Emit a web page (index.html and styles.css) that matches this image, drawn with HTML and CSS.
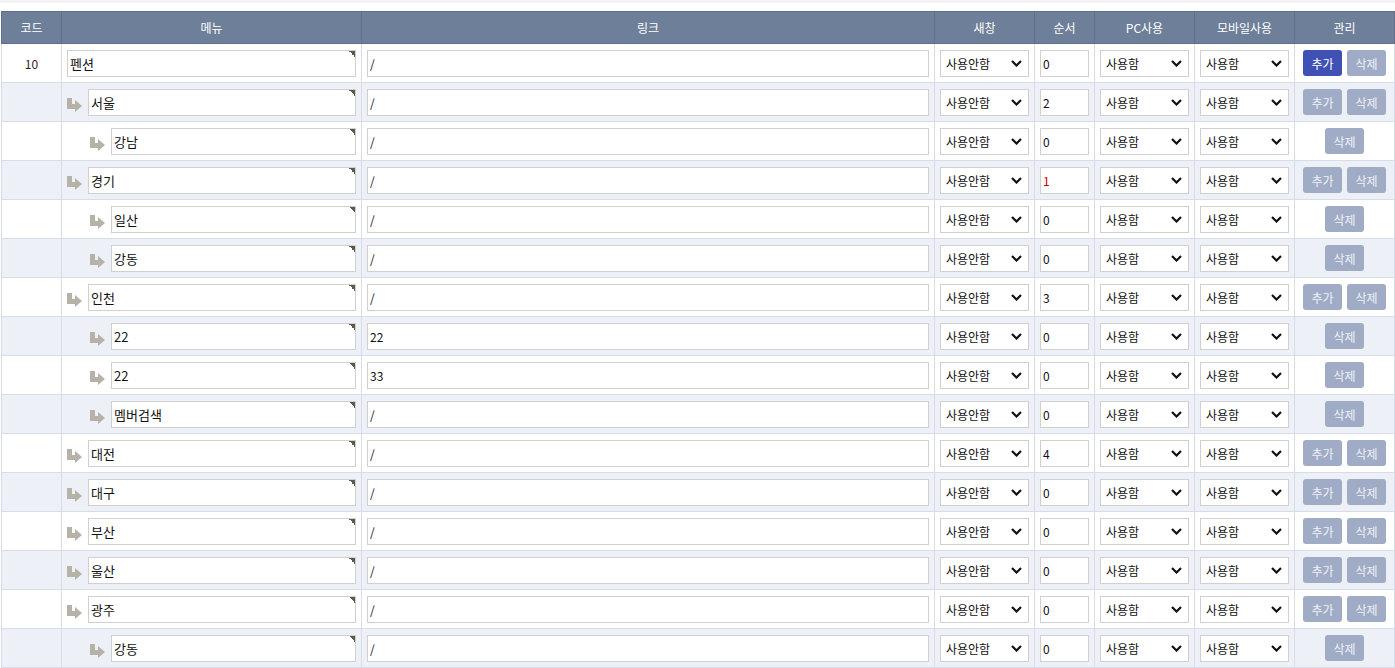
FILE: index.html
```html
<!DOCTYPE html>
<html>
<head>
  <title>메뉴 관리</title>
  <link rel="stylesheet" href="styles.css">
</head>
<body>
  <div class="topline"></div>
  <div class="wrap">
    <table class="menu-table">
      <colgroup>
        <col style="width:60px"><col style="width:300px"><col style="width:573px"><col style="width:100px">
        <col style="width:60px"><col style="width:100px"><col style="width:100px"><col style="width:100px">
      </colgroup>
      <thead>
        <tr>
          <th>코드</th><th>메뉴</th><th>링크</th><th>새창</th><th>순서</th><th>PC사용</th><th>모바일사용</th><th>관리</th>
        </tr>
      </thead>
      <tbody>
        <tr>
          <td class="code">10</td>
          <td><div class="menu-cell"><input class="name" value="펜션"></div></td>
          <td><input class="link" value="/"></td>
          <td><select><option>사용안함</option></select></td>
          <td><input class="order" value="0"></td>
          <td><select><option>사용함</option></select></td>
          <td><select><option>사용함</option></select></td>
          <td><div class="btns"><button class="btn on">추가</button><button class="btn">삭제</button></div></td>
        </tr>
        <tr>
          <td></td>
          <td><div class="menu-cell d1"><span class="arrow"><svg viewBox="0 0 15 14"><path d="M0 0H5V6H8V2L15 8L8 14V11H0Z"/></svg></span><input class="name" value="서울"></div></td>
          <td><input class="link" value="/"></td>
          <td><select><option>사용안함</option></select></td>
          <td><input class="order" value="2"></td>
          <td><select><option>사용함</option></select></td>
          <td><select><option>사용함</option></select></td>
          <td><div class="btns"><button class="btn">추가</button><button class="btn">삭제</button></div></td>
        </tr>
        <tr>
          <td></td>
          <td><div class="menu-cell d2"><span class="arrow"><svg viewBox="0 0 15 14"><path d="M0 0H5V6H8V2L15 8L8 14V11H0Z"/></svg></span><input class="name" value="강남"></div></td>
          <td><input class="link" value="/"></td>
          <td><select><option>사용안함</option></select></td>
          <td><input class="order" value="0"></td>
          <td><select><option>사용함</option></select></td>
          <td><select><option>사용함</option></select></td>
          <td><div class="btns"><button class="btn">삭제</button></div></td>
        </tr>
        <tr>
          <td></td>
          <td><div class="menu-cell d1"><span class="arrow"><svg viewBox="0 0 15 14"><path d="M0 0H5V6H8V2L15 8L8 14V11H0Z"/></svg></span><input class="name" value="경기"></div></td>
          <td><input class="link" value="/"></td>
          <td><select><option>사용안함</option></select></td>
          <td><input class="order red" value="1"></td>
          <td><select><option>사용함</option></select></td>
          <td><select><option>사용함</option></select></td>
          <td><div class="btns"><button class="btn">추가</button><button class="btn">삭제</button></div></td>
        </tr>
        <tr>
          <td></td>
          <td><div class="menu-cell d2"><span class="arrow"><svg viewBox="0 0 15 14"><path d="M0 0H5V6H8V2L15 8L8 14V11H0Z"/></svg></span><input class="name" value="일산"></div></td>
          <td><input class="link" value="/"></td>
          <td><select><option>사용안함</option></select></td>
          <td><input class="order" value="0"></td>
          <td><select><option>사용함</option></select></td>
          <td><select><option>사용함</option></select></td>
          <td><div class="btns"><button class="btn">삭제</button></div></td>
        </tr>
        <tr>
          <td></td>
          <td><div class="menu-cell d2"><span class="arrow"><svg viewBox="0 0 15 14"><path d="M0 0H5V6H8V2L15 8L8 14V11H0Z"/></svg></span><input class="name" value="강동"></div></td>
          <td><input class="link" value="/"></td>
          <td><select><option>사용안함</option></select></td>
          <td><input class="order" value="0"></td>
          <td><select><option>사용함</option></select></td>
          <td><select><option>사용함</option></select></td>
          <td><div class="btns"><button class="btn">삭제</button></div></td>
        </tr>
        <tr>
          <td></td>
          <td><div class="menu-cell d1"><span class="arrow"><svg viewBox="0 0 15 14"><path d="M0 0H5V6H8V2L15 8L8 14V11H0Z"/></svg></span><input class="name" value="인천"></div></td>
          <td><input class="link" value="/"></td>
          <td><select><option>사용안함</option></select></td>
          <td><input class="order" value="3"></td>
          <td><select><option>사용함</option></select></td>
          <td><select><option>사용함</option></select></td>
          <td><div class="btns"><button class="btn">추가</button><button class="btn">삭제</button></div></td>
        </tr>
        <tr>
          <td></td>
          <td><div class="menu-cell d2"><span class="arrow"><svg viewBox="0 0 15 14"><path d="M0 0H5V6H8V2L15 8L8 14V11H0Z"/></svg></span><input class="name" value="22"></div></td>
          <td><input class="link" value="22"></td>
          <td><select><option>사용안함</option></select></td>
          <td><input class="order" value="0"></td>
          <td><select><option>사용함</option></select></td>
          <td><select><option>사용함</option></select></td>
          <td><div class="btns"><button class="btn">삭제</button></div></td>
        </tr>
        <tr>
          <td></td>
          <td><div class="menu-cell d2"><span class="arrow"><svg viewBox="0 0 15 14"><path d="M0 0H5V6H8V2L15 8L8 14V11H0Z"/></svg></span><input class="name" value="22"></div></td>
          <td><input class="link" value="33"></td>
          <td><select><option>사용안함</option></select></td>
          <td><input class="order" value="0"></td>
          <td><select><option>사용함</option></select></td>
          <td><select><option>사용함</option></select></td>
          <td><div class="btns"><button class="btn">삭제</button></div></td>
        </tr>
        <tr>
          <td></td>
          <td><div class="menu-cell d2"><span class="arrow"><svg viewBox="0 0 15 14"><path d="M0 0H5V6H8V2L15 8L8 14V11H0Z"/></svg></span><input class="name" value="멤버검색"></div></td>
          <td><input class="link" value="/"></td>
          <td><select><option>사용안함</option></select></td>
          <td><input class="order" value="0"></td>
          <td><select><option>사용함</option></select></td>
          <td><select><option>사용함</option></select></td>
          <td><div class="btns"><button class="btn">삭제</button></div></td>
        </tr>
        <tr>
          <td></td>
          <td><div class="menu-cell d1"><span class="arrow"><svg viewBox="0 0 15 14"><path d="M0 0H5V6H8V2L15 8L8 14V11H0Z"/></svg></span><input class="name" value="대전"></div></td>
          <td><input class="link" value="/"></td>
          <td><select><option>사용안함</option></select></td>
          <td><input class="order" value="4"></td>
          <td><select><option>사용함</option></select></td>
          <td><select><option>사용함</option></select></td>
          <td><div class="btns"><button class="btn">추가</button><button class="btn">삭제</button></div></td>
        </tr>
        <tr>
          <td></td>
          <td><div class="menu-cell d1"><span class="arrow"><svg viewBox="0 0 15 14"><path d="M0 0H5V6H8V2L15 8L8 14V11H0Z"/></svg></span><input class="name" value="대구"></div></td>
          <td><input class="link" value="/"></td>
          <td><select><option>사용안함</option></select></td>
          <td><input class="order" value="0"></td>
          <td><select><option>사용함</option></select></td>
          <td><select><option>사용함</option></select></td>
          <td><div class="btns"><button class="btn">추가</button><button class="btn">삭제</button></div></td>
        </tr>
        <tr>
          <td></td>
          <td><div class="menu-cell d1"><span class="arrow"><svg viewBox="0 0 15 14"><path d="M0 0H5V6H8V2L15 8L8 14V11H0Z"/></svg></span><input class="name" value="부산"></div></td>
          <td><input class="link" value="/"></td>
          <td><select><option>사용안함</option></select></td>
          <td><input class="order" value="0"></td>
          <td><select><option>사용함</option></select></td>
          <td><select><option>사용함</option></select></td>
          <td><div class="btns"><button class="btn">추가</button><button class="btn">삭제</button></div></td>
        </tr>
        <tr>
          <td></td>
          <td><div class="menu-cell d1"><span class="arrow"><svg viewBox="0 0 15 14"><path d="M0 0H5V6H8V2L15 8L8 14V11H0Z"/></svg></span><input class="name" value="울산"></div></td>
          <td><input class="link" value="/"></td>
          <td><select><option>사용안함</option></select></td>
          <td><input class="order" value="0"></td>
          <td><select><option>사용함</option></select></td>
          <td><select><option>사용함</option></select></td>
          <td><div class="btns"><button class="btn">추가</button><button class="btn">삭제</button></div></td>
        </tr>
        <tr>
          <td></td>
          <td><div class="menu-cell d1"><span class="arrow"><svg viewBox="0 0 15 14"><path d="M0 0H5V6H8V2L15 8L8 14V11H0Z"/></svg></span><input class="name" value="광주"></div></td>
          <td><input class="link" value="/"></td>
          <td><select><option>사용안함</option></select></td>
          <td><input class="order" value="0"></td>
          <td><select><option>사용함</option></select></td>
          <td><select><option>사용함</option></select></td>
          <td><div class="btns"><button class="btn">추가</button><button class="btn">삭제</button></div></td>
        </tr>
        <tr>
          <td></td>
          <td><div class="menu-cell d2"><span class="arrow"><svg viewBox="0 0 15 14"><path d="M0 0H5V6H8V2L15 8L8 14V11H0Z"/></svg></span><input class="name" value="강동"></div></td>
          <td><input class="link" value="/"></td>
          <td><select><option>사용안함</option></select></td>
          <td><input class="order" value="0"></td>
          <td><select><option>사용함</option></select></td>
          <td><select><option>사용함</option></select></td>
          <td><div class="btns"><button class="btn">삭제</button></div></td>
        </tr>
      </tbody>
    </table>
  </div>
</body>
</html>
```

FILE: styles.css
```css
body {
  margin: 0;
  font-family: "Noto Sans CJK KR", "Noto Sans", sans-serif;
  font-size: 12px;
  color: #222;
  background: #fff;
}

.topline {
  height: 3px;
  background: #f3f3f3;
}

.wrap {
  padding: 8px 1px 0;
}

.menu-table {
  width: 1393px;
  table-layout: fixed;
  border-collapse: collapse;
}

.menu-table th {
  height: 31px;
  padding: 0;
  background: #6e7f99;
  color: #fff;
  font-weight: normal;
  font-size: 12px;
  border: 1px solid #5f6f88;
}

.menu-table td {
  height: 38px;
  padding: 0 5px;
  border: 1px solid #d7dde8;
  text-align: center;
}

.menu-table tbody tr:nth-child(even) td {
  background: #edf0f7;
}

.code {
  color: #3a1a1a;
}

.menu-cell {
  display: flex;
  align-items: center;
}

.menu-cell.d2 {
  padding-left: 23px;
}

.arrow {
  width: 15px;
  height: 14px;
  margin: 5px 6px 0 0;
  flex: none;
}

.arrow svg {
  display: block;
  width: 15px;
  height: 14px;
  fill: #b7b2a7;
}

input,
select {
  box-sizing: border-box;
  height: 27px;
  width: 100%;
  border: 1px solid #d0d0d0;
  background: #fff;
  font-family: inherit;
  font-size: 12px;
  color: #111;
  padding: 0 2px;
  margin: 0;
  outline: none;
}

input.name {
  flex: 1;
  min-width: 0;
  font-size: 13px;
  background: #fff linear-gradient(225deg, #5b5b4b 50%, transparent 50%) no-repeat right top / 6px 6px;
}

input.order.red {
  color: #c00;
}

select {
  appearance: none;
  -webkit-appearance: none;
  padding: 0 5px;
  background: #fff url("data:image/svg+xml,%3Csvg xmlns='http://www.w3.org/2000/svg' width='11' height='7' viewBox='0 0 11 7'%3E%3Cpath d='M1 1l4.5 4.5L10 1' fill='none' stroke='%23111' stroke-width='2.2'/%3E%3C/svg%3E") no-repeat right 6px center;
}

.btns {
  display: flex;
  justify-content: center;
  gap: 5px;
}

.btn {
  width: 39px;
  height: 26px;
  padding: 0;
  border: none;
  border-radius: 3px;
  background: #a0abc6;
  color: #eef1f8;
  font-family: inherit;
  font-size: 12px;
  cursor: pointer;
}

.btn.on {
  background: #3f51b5;
  color: #fff;
}
```
